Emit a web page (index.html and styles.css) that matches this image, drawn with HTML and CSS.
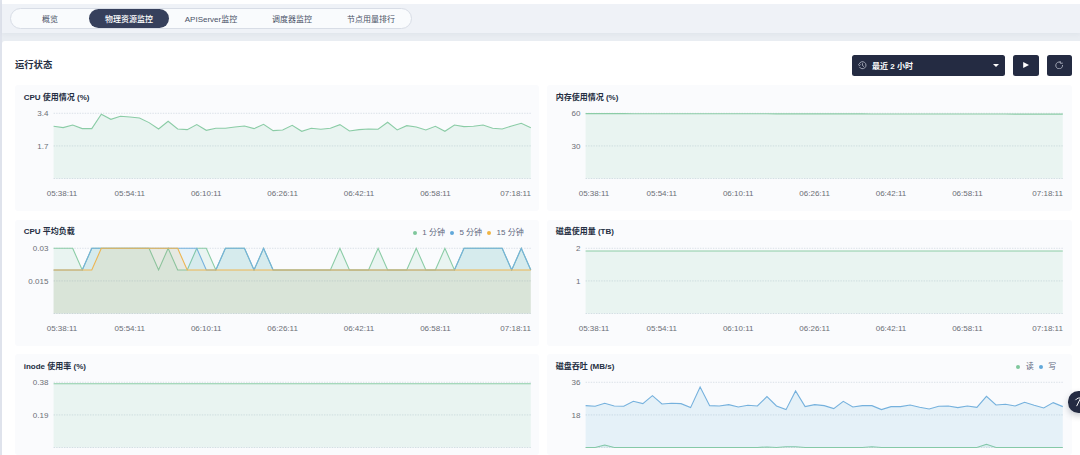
FILE: index.html
```html
<!DOCTYPE html>
<html lang="zh-CN">
<head>
<meta charset="utf-8">
<title>物理资源监控</title>
<link rel="stylesheet" href="styles.css">
</head>
<body>
<header class="topbar">
  <nav class="tabs">
    <a class="tab">概览</a>
    <a class="tab active">物理资源监控</a>
    <a class="tab">APIServer监控</a>
    <a class="tab">调度器监控</a>
    <a class="tab">节点用量排行</a>
  </nav>
</header>
<main class="panel">
  <div class="panel-head">
    <h1 class="panel-title">运行状态</h1>
    <div class="actions">
      <button class="range">
        <svg class="icon-clock" viewBox="0 0 16 16"><path d="M2.3 5.5A6.6 6.6 0 1 1 2.6 11M8.4 4.2v4.2l3 2.4M.4 6l2 2.8 2.6-2.2" /></svg>
        <span>最近 2 小时</span>
        <svg class="icon-caret" viewBox="0 0 6 3"><path d="M0 0h6L3 3z" /></svg>
      </button>
      <button class="action"><svg class="icon-play" viewBox="0 0 6 6"><path d="M.2 0L6 3 .2 6z" /></svg></button>
      <button class="action"><svg class="icon-refresh" viewBox="0 0 16 16"><path d="M10 2.3A6.4 6.4 0 1 0 14.2 7.5M9.6.2l.6 4.2 4.4-.4" /></svg></button>
    </div>
  </div>
  <div class="cards">
    <section class="card"><div class="card-head"><h2>CPU 使用情况 (%)</h2></div><svg class="chart" data-chart="cpu"></svg></section>
    <section class="card"><div class="card-head"><h2>内存使用情况 (%)</h2></div><svg class="chart" data-chart="memory"></svg></section>
    <section class="card"><div class="card-head"><h2>CPU 平均负载</h2>
      <ul class="legend"><li class="green">1 分钟</li><li class="blue">5 分钟</li><li class="yellow">15 分钟</li></ul></div><svg class="chart" data-chart="load"></svg></section>
    <section class="card"><div class="card-head"><h2>磁盘使用量 (TB)</h2></div><svg class="chart" data-chart="disk"></svg></section>
    <section class="card"><div class="card-head"><h2>inode 使用率 (%)</h2></div><svg class="chart" data-chart="inode"></svg></section>
    <section class="card"><div class="card-head"><h2>磁盘吞吐 (MB/s)</h2>
      <ul class="legend"><li class="green">读</li><li class="blue">写</li></ul></div><svg class="chart" data-chart="throughput"></svg></section>
  </div>
</main>
<button class="toolbox"><svg viewBox="0 0 16 16"><path d="M2 5.5C4 2.5 7 2 12 3M8.5 3.5L3.5 13.5" /></svg></button>
<script src="charts.js"></script>
</body>
</html>
```
FILE: styles.css
```css
* { box-sizing: border-box; }
body {
  margin: 0;
  height: 455px;
  overflow: hidden;
  position: relative;
  padding-left: 2px;
  background: linear-gradient(90deg, #dfe3ec 2px, #e9edf2 2px);
  font-family: "Liberation Sans", "Noto Sans CJK SC", sans-serif;
  font-size: 8px;
  color: #4a5266;
}
h1, h2, ul { margin: 0; padding: 0; list-style: none; }
button { border: 0; padding: 0; font: inherit; color: #fff; }
svg { display: block; }
.topbar {
  height: 33px;
  padding: 4px 0 0 8px;
  border-top: 4px solid #fff;
  background: #eff2f7;
  box-shadow: 0 2px 4px rgba(36, 46, 66, .04);
}
.tabs {
  display: grid;
  grid-template-columns: 78px 80px 84px 78px 80px;
  width: 402px;
  height: 21px;
  border: 1px solid #d8dde6;
  border-radius: 11px;
  background: #f9fbfd;
}
.tab { display: flex; align-items: center; justify-content: center; border-radius: 10px; }
.tab.active { background: #36405c; color: #fff; font-weight: 500; }
.panel {
  margin-top: 8px;
  height: 414px;
  padding: 13.4px 8px 0 13px;
  border-radius: 3px 0 0 0;
  background: #fff;
}
.panel-head { display: flex; align-items: center; justify-content: space-between; height: 22px; }
.panel-title { font-size: 9.3px; line-height: 14px; padding-top: 0; color: #242e42; }
.actions { display: flex; gap: 8px; }
.range, .action { height: 21.5px; border-radius: 2.5px; background: #242b42; display: flex; align-items: center; }
.range { width: 153px; padding: 0 6px; font-weight: 700; }
.range span { margin-left: 5.5px; }
.action { width: 25.5px; justify-content: center; }
.icon-clock { width: 8.5px; height: 8.5px; fill: none; stroke: #b2b7c5; stroke-width: 1.6; }
.icon-caret { width: 6px; height: 3px; margin-left: auto; fill: #fff; }
.icon-play { width: 6px; height: 6px; margin-bottom: 1px; fill: #fff; }
.icon-refresh { width: 8.5px; height: 8.5px; margin-bottom: 1px; fill: none; stroke: #aeb3c1; stroke-width: 1.7; }
.cards {
  display: grid;
  grid-template-columns: 524px 524.5px;
  grid-template-rows: 126px 126px 100.5px;
  gap: 8.6px 8px;
  margin-top: 8.9px;
}
.card { border-radius: 3px; background: #fafbfd; }
.card-head { display: flex; justify-content: space-between; height: 18px; padding: 6.5px 15.3px 0 8.7px; }
.card h2 { font-size: 8px; line-height: 12px; color: #242e42; }
.legend { display: flex; gap: 5px; padding-top: 1.5px; line-height: 12px; color: #5f6880; }
.legend li { display: flex; align-items: center; gap: 5.5px; }
.legend li::before { content: ""; width: 4px; height: 4px; border-radius: 50%; background: currentColor; }
.legend .green::before { background: #7fc79c; }
.legend .blue::before { background: #61a8da; }
.legend .yellow::before { background: #efb443; }
.chart { width: 524px; height: 82px; overflow: visible; }
.tick { font-size: 8px; fill: #6b6e76; }
.tick.value { text-anchor: end; }
.tick.time { text-anchor: middle; }
.grid { stroke: #d3dbe3; stroke-width: .8; stroke-dasharray: 1.4 1.2; }
.line { fill: none; stroke-width: 1.1; }
.line.green { stroke: #8bcca6; }
.line.blue { stroke: #75b1dd; }
.line.yellow { stroke: #edb552; }
.area.green { fill: #55bc8a; fill-opacity: .1; }
.area.blue { fill: #329dce; fill-opacity: .1; }
.area.yellow { fill: #f5a623; fill-opacity: .1; }
.toolbox {
  position: absolute;
  left: 1067.5px;
  top: 391px;
  width: 21.5px;
  height: 21.5px;
  border-radius: 50%;
  background: #242b42;
  box-shadow: 0 3px 6px rgba(36, 46, 66, .25);
}
.toolbox svg { width: 12px; height: 12px; margin-left: 6px; fill: none; stroke: #fff; stroke-width: 1.3; }
```
FILE: charts.js
```js
// Series values are pixel depths below the top gridline, in thirds of a pixel.
const POINTS = 51, LEFT = 38.6, WIDTH = 477.2, TOP = 10.3, HEIGHT = 65.2;
const flat = v => Array(POINTS).fill(v);
const peaks = (base, map) => flat(base).map((v, i) => map[i] ?? v);
const upAt = spans => flat(65).map((v, i) => spans.some(([a, b]) => i >= a && i <= b) ? 0 : v);

const charts = {
  cpu: { times: true, ticks: ['3.4', '1.7'], series: [['green',
    [127,131,123,134,134,91,106,97,99,102,116,135,112,135,137,122,139,133,133,129,126,134,121,140,138,124,142,133,136,133,122,141,137,135,136,115,138,125,129,138,127,142,123,128,127,123,133,135,126,118,131].map(v => v - 88)]] },
  memory: { times: true, ticks: ['60', '30'], series: [['green', flat(0).map((v, i) => 1 + i * 0.03)]] },
  load: { times: true, ticks: ['0.03', '0.015'], series: [
    ['green', upAt([[0,2],[4,10],[12,12],[15,16],[18,20],[22,22],[30,30],[34,34],[38,38],[41,41],[43,47],[49,49]])],
    ['blue', upAt([[4,15],[18,20],[22,22],[43,47],[49,49]])],
    ['yellow', upAt([[5,13]])]] },
  disk: { times: true, ticks: ['2', '1'], series: [['green', flat(8)]] },
  inode: { ticks: ['0.38', '0.19'], series: [['green', flat(4.5)]] },
  throughput: { ticks: ['36', '18'], series: [
    ['green', peaks(195.5, { 2: 188, 19: 194, 21: 193.5, 22: 193.5, 30: 193.5, 42: 186 })],
    ['blue', [167,169,160,168,169,154,161,137,162,160,161,173,111,167,168,164,171,166,168,140,168,179,123,170,164,167,176,154,171,167,167,179,170,170,165,172,177,169,168,173,168,172,139,165,163,168,157,166,174,158,170].map(v => v - 97)]] }
};
const timeLabels = [['05:38:11', 47], ['05:54:11', 114.8], ['06:10:11', 191.2], ['06:26:11', 267.6], ['06:42:11', 344], ['06:58:11', 420.4], ['07:18:11', 500.6]];

document.querySelectorAll('.chart').forEach(svg => {
  const { ticks, series, times } = charts[svg.dataset.chart];
  let out = '';
  [0, .5, 1].forEach((f, i) => {
    const y = TOP + HEIGHT * f;
    out += `<line class="grid" x1="${LEFT}" x2="${LEFT + WIDTH}" y1="${y}" y2="${y}"/>`;
    if (ticks[i]) out += `<text class="tick value" x="33.4" y="${y + 2.8}">${ticks[i]}</text>`;
  });
  series.forEach(([color, values]) => {
    const pts = values.map((v, i) => `${(LEFT + WIDTH * i / (POINTS - 1)).toFixed(2)},${(TOP + v / 3).toFixed(2)}`).join(' ');
    out += `<polygon class="area ${color}" points="${LEFT},${TOP + HEIGHT} ${pts} ${LEFT + WIDTH},${TOP + HEIGHT}"/>`;
    out += `<polyline class="line ${color}" points="${pts}"/>`;
  });
  if (times) timeLabels.forEach(([label, x]) => { out += `<text class="tick time" x="${x}" y="93">${label}</text>`; });
  svg.innerHTML = out;
});
```
